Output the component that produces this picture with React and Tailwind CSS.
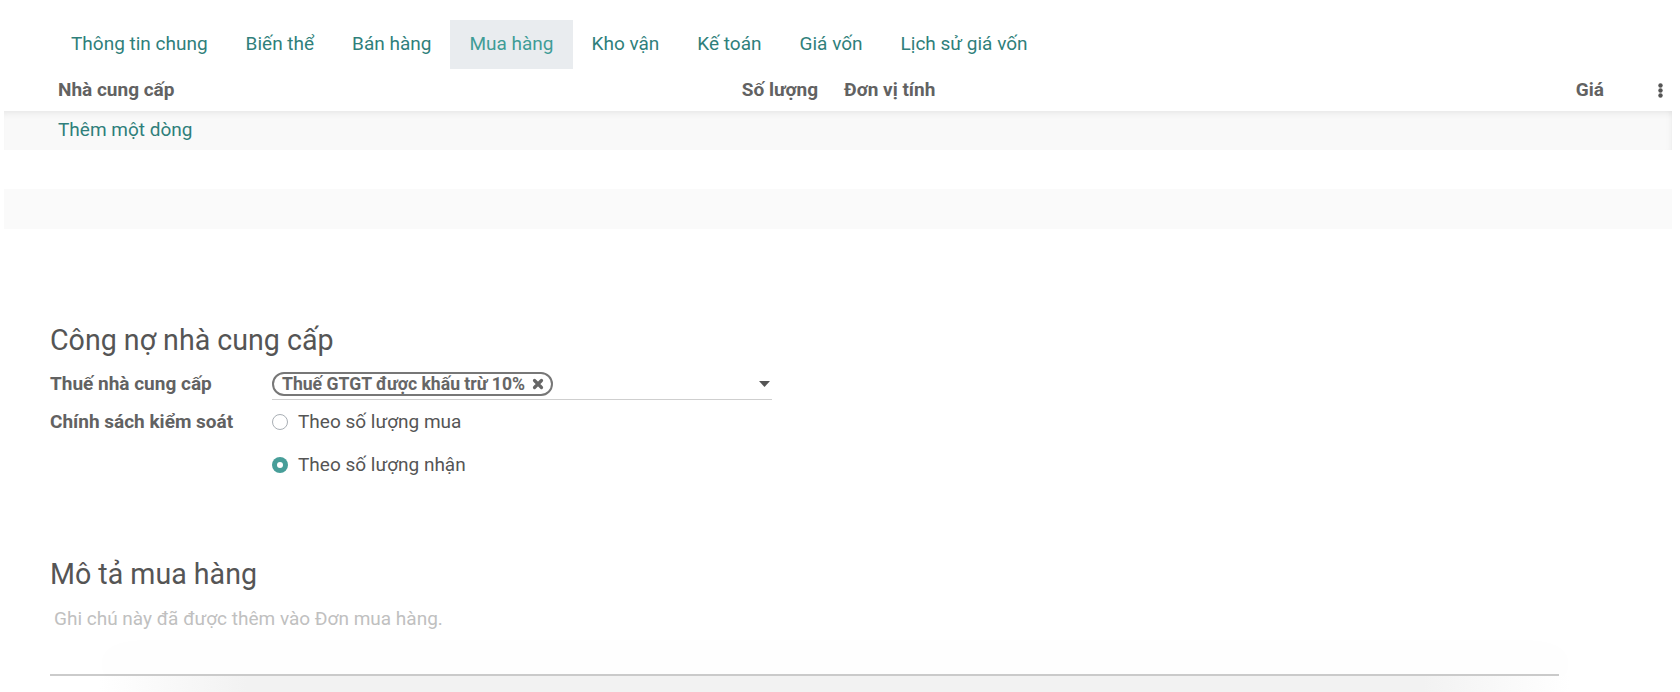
const TABS = ['Thông tin chung', 'Biến thể', 'Bán hàng', 'Mua hàng', 'Kho vận', 'Kế toán', 'Giá vốn', 'Lịch sử giá vốn']

function Radio({ checked, label }) {
  return (
    <label className="flex items-center h-[30px] gap-[10px] text-[19px] text-[#555]">
      {checked ? (
        <span className="w-[16px] h-[16px] rounded-full bg-[#479e99] flex items-center justify-center">
          <span className="w-[6px] h-[6px] rounded-full bg-white" />
        </span>
      ) : (
        <span className="w-[16px] h-[16px] rounded-full border border-[#a9afb5] bg-white" />
      )}
      {label}
    </label>
  )
}

export default function App() {
  return (
    <div className="w-full h-[692px] bg-white overflow-hidden flex flex-col" style={{ fontFamily: 'Roboto, "Noto Sans", sans-serif' }}>
      {/* Tabs */}
      <div className="flex ml-[52px] mt-[20px]">
        {TABS.map(t => (
          <div key={t}
            className={`h-[49px] px-[19px] flex items-center text-[19px] ${t === 'Mua hàng' ? 'bg-[#e9ecef] text-[#3f9c97]' : 'text-[#2f7f7b]'}`}>
            {t}
          </div>
        ))}
      </div>

      {/* Supplier table */}
      <div className="mx-[4px] w-[1668px]">
        <div className="flex items-center h-[42px] text-[19px] font-bold text-[#626262]">
          <div className="w-[680px] pl-[54px]">Nhà cung cấp</div>
          <div className="w-[134px] text-right">Số lượng</div>
          <div className="flex-1 pl-[26px]">Đơn vị tính</div>
          <div className="text-right">Giá</div>
          <div className="w-[68px] flex justify-end pr-[9px]">
            <svg width="5" height="15" viewBox="0 0 5 15" fill="#555">
              <circle cx="2.5" cy="2.5" r="2.2" />
              <circle cx="2.5" cy="7.5" r="2.2" />
              <circle cx="2.5" cy="12.5" r="2.2" />
            </svg>
          </div>
        </div>
        <div className="h-[39px] bg-[#f9f9f9] flex items-center pl-[54px] text-[19px] text-[#2f7f7b] shadow-[inset_0_7px_7px_-5px_rgba(0,0,0,0.08),inset_-6px_0_6px_-5px_rgba(0,0,0,0.05)]">
          Thêm một dòng
        </div>
        <div className="h-[39px]" />
        <div className="h-[40px] bg-[#fafafa]" />
      </div>

      {/* Vendor bills */}
      <div className="ml-[50px] mt-[93px]">
        <h2 className="h-[36px] leading-[36px] text-[28.6px] text-[#555]">Công nợ nhà cung cấp</h2>
        <div className="flex mt-[11px]">
          <div className="w-[222px] h-[31px] flex items-center text-[19px] font-bold text-[#626262]">Thuế nhà cung cấp</div>
          <div className="w-[500px] h-[31px] flex items-center justify-between border-b border-[#cfcfcf]">
            <span className="h-[24px] flex items-center gap-[7px] pl-[8px] pr-[7px] rounded-full border-[2.5px] border-[#777] text-[17.6px] font-bold text-[#666]">
              Thuế GTGT được khấu trừ 10%
              <svg width="12" height="12" viewBox="0 0 12 12" stroke="#666" strokeWidth="3.2" strokeLinecap="round">
                <path d="M2.5 2.5L9.5 9.5M9.5 2.5L2.5 9.5" />
              </svg>
            </span>
            <svg width="11" height="7" viewBox="0 0 11 7" className="mr-[2px]">
              <path d="M0 0H11L5.5 6Z" fill="#555" />
            </svg>
          </div>
        </div>
        <div className="flex mt-[7px]">
          <div className="w-[222px] h-[30px] flex items-center text-[19px] font-bold text-[#626262]">Chính sách kiểm soát</div>
          <div className="flex flex-col gap-[13px]">
            <Radio label="Theo số lượng mua" />
            <Radio checked label="Theo số lượng nhận" />
          </div>
        </div>

        {/* Purchase description */}
        <h2 className="mt-[76px] h-[36px] leading-[36px] text-[28.6px] text-[#555]">Mô tả mua hàng</h2>
        <div className="mt-[13px] h-[28px] leading-[28px] pl-[4px] text-[19px] text-[#c0c0c0]">
          Ghi chú này đã được thêm vào Đơn mua hàng.
        </div>
        <div className="mt-[41px] w-[1509px] h-[2px] bg-[#cbcbcb]" />
      </div>
      <div className="flex-1 ml-[100px] mr-[110px] bg-[linear-gradient(to_right,#ffffff,#f2f2f2_10%,#f2f2f2_90%,#ffffff)] shadow-[0_-20px_40px_0px_rgba(0,0,0,0.025)]" />
    </div>
  )
}
